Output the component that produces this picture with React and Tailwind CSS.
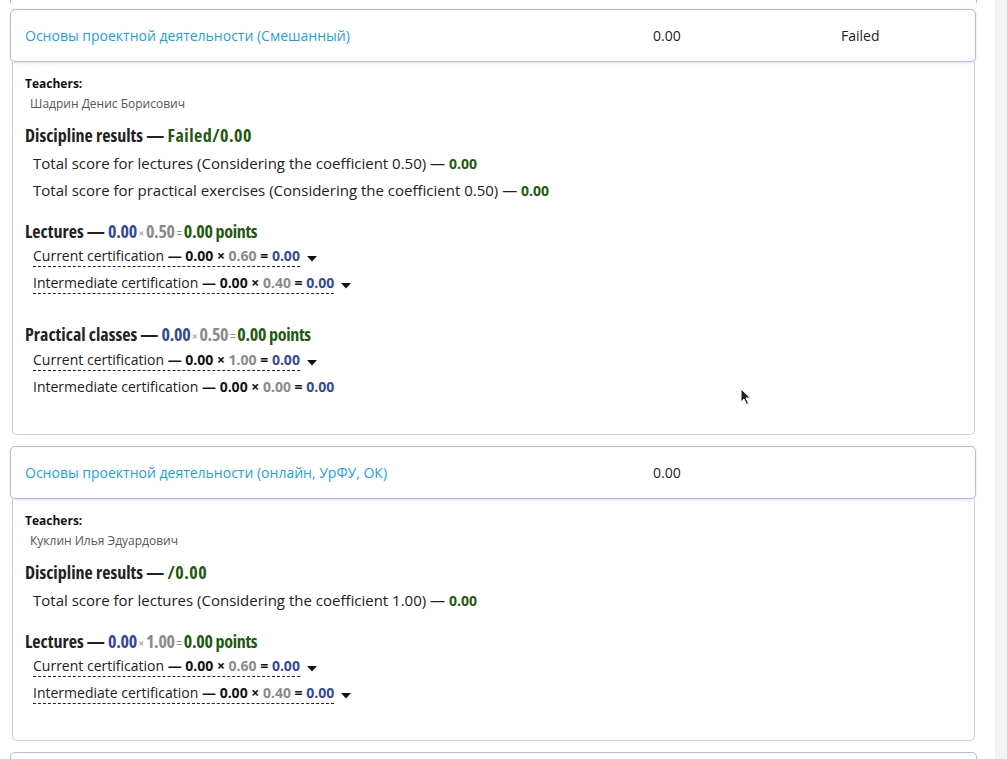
import React from 'react'

const COURSES = [
  {
    title: 'Основы проектной деятельности (Смешанный)',
    score: '0.00',
    status: 'Failed',
    teacher: 'Шадрин Денис Борисович',
    result: 'Failed/0.00',
    totals: [
      ['Total score for lectures (Considering the coefficient 0.50)', '0.00'],
      ['Total score for practical exercises (Considering the coefficient 0.50)', '0.00'],
    ],
    groups: [
      {
        name: 'Lectures',
        value: '0.00',
        coef: '0.50',
        points: '0.00',
        items: [
          { label: 'Current certification', value: '0.00', coef: '0.60', result: '0.00', open: true },
          { label: 'Intermediate certification', value: '0.00', coef: '0.40', result: '0.00', open: true },
        ],
      },
      {
        name: 'Practical classes',
        value: '0.00',
        coef: '0.50',
        points: '0.00',
        items: [
          { label: 'Current certification', value: '0.00', coef: '1.00', result: '0.00', open: true },
          { label: 'Intermediate certification', value: '0.00', coef: '0.00', result: '0.00', open: false },
        ],
      },
    ],
  },
  {
    title: 'Основы проектной деятельности (онлайн, УрФУ, ОК)',
    score: '0.00',
    status: '',
    teacher: 'Куклин Илья Эдуардович',
    result: '/0.00',
    totals: [['Total score for lectures (Considering the coefficient 1.00)', '0.00']],
    groups: [
      {
        name: 'Lectures',
        value: '0.00',
        coef: '1.00',
        points: '0.00',
        items: [
          { label: 'Current certification', value: '0.00', coef: '0.60', result: '0.00', open: true },
          { label: 'Intermediate certification', value: '0.00', coef: '0.40', result: '0.00', open: true },
        ],
      },
    ],
  },
]

const heading = "font-['Open_Sans','Liberation_Sans_Narrow','DejaVu_Sans_Condensed',sans-serif] font-bold font-stretch-[80%] text-[18px] leading-[24px] text-[#222]"

function Caret() {
  return (
    <svg width="10" height="6" viewBox="0 0 10 6" className="ml-[7px] mt-[4px] inline-block">
      <path d="M0 0 L10 0 L5 5.5 Z" fill="#111" />
    </svg>
  )
}

function CertRow({ item, top }) {
  return (
    <div className={`flex items-center pl-[8px] ${top}`}>
      <div className={`leading-[20px] text-[14px] text-[#222] ${item.open ? 'border-b border-dashed border-[#222]' : 'border-b border-transparent'}`}>
        {item.label}{' '}
        <span className="font-bold text-[#111]">— {item.value} × </span>
        <span className="font-bold text-[#8a8a8a]">{item.coef}</span>
        <span className="font-bold text-[#111]"> = </span>
        <span className="font-bold text-[#34489a]">{item.result}</span>
      </div>
      {item.open && <Caret />}
    </div>
  )
}

function Op({ children }) {
  return <span className="text-[#8a8a8a] font-normal text-[12px] mx-[2px]">{children}</span>
}

function Group({ group, first }) {
  return (
    <div className={first ? 'mt-[15px]' : 'mt-[28px]'}>
      <div className={heading}>
        {group.name} — <span className="text-[#34489a] tracking-[-0.3px]">{group.value}</span>
        <Op>×</Op>
        <span className="text-[#8a8a8a] tracking-[-0.3px]">{group.coef}</span>
        <Op>=</Op>
        <span className="text-[#1f5a12] tracking-[-0.3px]">{group.points} points</span>
      </div>
      {group.items.map((it, i) => (
        <CertRow key={i} item={it} top={i > 0 ? 'mt-[6px]' : first ? 'mt-0' : 'mt-[1px]'} />
      ))}
    </div>
  )
}

function Course({ c }) {
  return (
    <div className="mx-[12px] mr-[32px]">
      <div className="-ml-[2px] -mr-[1px] h-[53px] flex items-center pl-[14px] bg-white border border-[#a9bcf9] rounded-[5px] shadow-[0_1px_3px_rgba(0,0,0,0.12)] text-[14px]">
        <div className="w-[628px] text-[#1d9fe6]">{c.title}</div>
        <div className="w-[188px] text-[#222]">{c.score}</div>
        <div className="text-[#222]">{c.status}</div>
      </div>
      <div className="border border-t-0 border-[#cfcfcf] rounded-b-[5px] pl-[12px] pt-[14px] pb-[36px]">
        <div className="text-[12px] leading-[16px] font-bold text-[#111]">Teachers:</div>
        <div className="text-[12px] leading-[16px] text-[#555] pl-[5px] mt-[4px]">{c.teacher}</div>
        <div className={`${heading} mt-[11px]`}>
          Discipline results — <span className="text-[#1f5a12] tracking-[0.5px]">{c.result}</span>
        </div>
        <div className="mt-[3px]">
          {c.totals.map(([t, v], i) => (
            <div key={i} className="pl-[8px] text-[15px] leading-[27px] text-[#222]">
              {t} — <span className="font-bold text-[14px] text-[#1f5a12]">{v}</span>
            </div>
          ))}
        </div>
        {c.groups.map((g, i) => (
          <Group key={i} group={g} first={i === 0} />
        ))}
      </div>
    </div>
  )
}

export default function App() {
  return (
    <div className="relative w-[1007px] h-[759px] overflow-hidden bg-white font-['Open_Sans','Liberation_Sans',sans-serif]">
      <div className="absolute right-0 top-0 h-full w-[12px] bg-[#f3f3f3]" />
      <div className="ml-[10px] mr-[30px] h-[3px] border-x border-[#a9bcf9]" />
      <div className="pt-[6px] flex flex-col gap-[11px]">
        {COURSES.map((c, i) => (
          <Course key={i} c={c} />
        ))}
        <div className="mx-[10px] mr-[30px] h-[20px] border border-[#a9bcf9] rounded-t-[5px]" />
      </div>
      <svg className="absolute left-[740px] top-[388px]" width="12" height="18" viewBox="0 0 12 18">
        <path d="M1 1 L1 14 L4 11 L6.5 16.5 L8.5 15.5 L6 10 L10.5 10 Z" fill="#222" stroke="#fff" strokeWidth="1" />
      </svg>
    </div>
  )
}
